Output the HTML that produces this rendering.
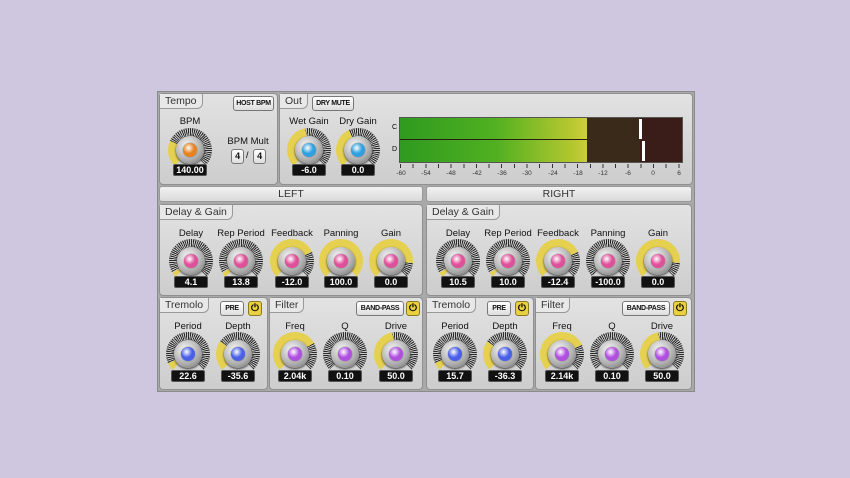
<!DOCTYPE html>
<html><head><meta charset="utf-8"><style>
*{box-sizing:border-box;margin:0;padding:0}
body{width:850px;height:478px;background:#cfc6e0;position:relative;overflow:hidden;font-family:"Liberation Sans",sans-serif}
#p{position:absolute;left:157px;top:91px;width:538px;height:301px;background:#a9a9a9;border:1px solid #8a8a8a}
.s{position:absolute;border:1px solid #8f8f8f;border-radius:4px;background:linear-gradient(#e2e2e2,#cdcdcd)}
.tab{position:absolute;height:15px;padding:0 5px;font-size:10.5px;line-height:14px;color:#333;border:1px solid #999;border-top:none;border-left:none;border-radius:0 0 6px 0;background:#e8e8e8;white-space:nowrap}
.btn{position:absolute;height:15px;font-size:7px;font-weight:bold;line-height:13px;text-align:center;color:#111;background:linear-gradient(#fff,#ddd);border:1px solid #777;border-radius:3px;letter-spacing:-.3px;white-space:nowrap;overflow:hidden}
.pw{position:absolute;width:14px;height:15px;background:#e8d040;border:1px solid #8a7a20;border-radius:3px;font-size:10px;line-height:13px;text-align:center;font-weight:bold}
.bar{position:absolute;height:16px;border:1px solid #999;border-radius:3px;background:linear-gradient(#f2f2f2,#dadada);font-size:10.5px;line-height:14px;text-align:center;color:#333}
.l{position:absolute;width:60px;text-align:center;font-size:9.5px;color:#111;white-space:nowrap}
.k{position:absolute;width:44px;height:44px;border-radius:50%;
background:conic-gradient(from 225deg,#e6d050 0 var(--a),transparent var(--a) 270deg,#d4d4d4 270deg),repeating-conic-gradient(#2a2a2a 0 3deg,#c8c8c8 3deg 6deg)}
.k::before{content:"";position:absolute;left:8px;top:8px;width:28px;height:28px;border-radius:50%;background:radial-gradient(circle at 40% 35%,#fafafa,#aaa 60%,#666);box-shadow:0 1px 2px #333}
.k::after{content:"";position:absolute;left:15px;top:15px;width:14px;height:14px;border-radius:50%;background:radial-gradient(circle at 40% 35%,#fff,var(--c) 45%);box-shadow:0 0 1px #333}
.v{position:absolute;width:34px;height:12px;background:#111;border:1px solid #555;border-radius:2px;color:#fff;font-size:9px;line-height:10px;text-align:center;font-weight:bold}
.sc{position:absolute;top:170px;font-size:6.5px;color:#333;width:20px;text-align:center}
</style></head><body>
<div id="p"></div>
<div class="s" style="left:159px;top:93px;width:119px;height:92px"></div>
<div class="tab" style="left:160px;top:94px">Tempo</div>
<div class="btn" style="left:233px;top:96px;width:41px">HOST BPM</div>
<div class="s" style="left:279px;top:93px;width:414px;height:92px"></div>
<div class="tab" style="left:280px;top:94px">Out</div>
<div class="btn" style="left:312px;top:96px;width:42px">DRY MUTE</div>

<div class="l" style="left:160px;top:116px">BPM</div>
<div class="k" style="left:168px;top:128px;--a:70deg;--c:#e8821e"></div>
<div class="v" style="left:173px;top:164px">140.00</div>
<div class="l" style="left:218px;top:136px">BPM Mult</div>
<div class="btn" style="left:231px;top:149px;width:13px;height:15px;font-size:9px">4</div>
<div style="position:absolute;left:246px;top:150px;font-size:9px">/</div>
<div class="btn" style="left:253px;top:149px;width:13px;height:15px;font-size:9px">4</div>

<div class="l" style="left:279px;top:116px">Wet Gain</div>
<div class="k" style="left:287px;top:128px;--a:125deg;--c:#30a0e0"></div>
<div class="v" style="left:292px;top:164px">-6.0</div>
<div class="l" style="left:328px;top:116px">Dry Gain</div>
<div class="k" style="left:336px;top:128px;--a:110deg;--c:#30a0e0"></div>
<div class="v" style="left:341px;top:164px">0.0</div>

<div style="position:absolute;left:399px;top:117px;width:284px;height:46px;background:#2a1d16;border:1px solid #555"></div>
<div style="position:absolute;left:400px;top:118px;width:187px;height:21px;background:linear-gradient(90deg,#2f9a20,#50b020 50%,#b8c830 92%,#d0d040)"></div>
<div style="position:absolute;left:400px;top:140px;width:191px;height:22px;background:linear-gradient(90deg,#2f9a20,#50b020 50%,#b8c830 92%,#d0d040)"></div>
<div style="position:absolute;left:587px;top:118px;width:53px;height:44px;background:#3a2a1a"></div>
<div style="position:absolute;left:640px;top:118px;width:42px;height:44px;background:#3a1c18"></div>
<div style="position:absolute;left:639px;top:119px;width:3px;height:20px;background:#fff"></div>
<div style="position:absolute;left:642px;top:141px;width:3px;height:20px;background:#fff"></div>
<div style="position:absolute;left:392px;top:124px;font-size:7px">C</div>
<div style="position:absolute;left:392px;top:146px;font-size:7px">D</div>
<div style="position:absolute;left:400px;top:164px;width:280px;height:4px;background:repeating-linear-gradient(90deg,#333 0 1px,transparent 1px 12.65px)"></div>
<div class="sc" style="left:391px">-60</div><div class="sc" style="left:416px">-54</div><div class="sc" style="left:441px">-48</div><div class="sc" style="left:467px">-42</div><div class="sc" style="left:492px">-36</div><div class="sc" style="left:517px">-30</div><div class="sc" style="left:543px">-24</div><div class="sc" style="left:568px">-18</div><div class="sc" style="left:593px">-12</div><div class="sc" style="left:618px">-6</div><div class="sc" style="left:643px">0</div><div class="sc" style="left:669px">6</div>

<div class="bar" style="left:159px;top:186px;width:264px">LEFT</div>
<div class="bar" style="left:426px;top:186px;width:266px">RIGHT</div>

<div class="s" style="left:159px;top:204px;width:264px;height:92px"></div>
<div class="tab" style="left:160px;top:205px">Delay &amp; Gain</div>
<div class="s" style="left:426px;top:204px;width:266px;height:92px"></div>
<div class="tab" style="left:427px;top:205px">Delay &amp; Gain</div>

<div class="l" style="left:161px;top:228px">Delay</div><div class="k" style="left:169px;top:239px;--a:12deg;--c:#e0509a"></div><div class="v" style="left:174px;top:276px">4.1</div>
<div class="l" style="left:211px;top:228px">Rep Period</div><div class="k" style="left:219px;top:239px;--a:12deg;--c:#e0509a"></div><div class="v" style="left:224px;top:276px">13.8</div>
<div class="l" style="left:262px;top:228px">Feedback</div><div class="k" style="left:270px;top:239px;--a:200deg;--c:#e0509a"></div><div class="v" style="left:275px;top:276px">-12.0</div>
<div class="l" style="left:311px;top:228px">Panning</div><div class="k" style="left:319px;top:239px;--a:270deg;--c:#e0509a"></div><div class="v" style="left:324px;top:276px">100.0</div>
<div class="l" style="left:361px;top:228px">Gain</div><div class="k" style="left:369px;top:239px;--a:230deg;--c:#e0509a"></div><div class="v" style="left:374px;top:276px">0.0</div>

<div class="l" style="left:428px;top:228px">Delay</div><div class="k" style="left:436px;top:239px;--a:12deg;--c:#e0509a"></div><div class="v" style="left:441px;top:276px">10.5</div>
<div class="l" style="left:478px;top:228px">Rep Period</div><div class="k" style="left:486px;top:239px;--a:12deg;--c:#e0509a"></div><div class="v" style="left:491px;top:276px">10.0</div>
<div class="l" style="left:528px;top:228px">Feedback</div><div class="k" style="left:536px;top:239px;--a:200deg;--c:#e0509a"></div><div class="v" style="left:541px;top:276px">-12.4</div>
<div class="l" style="left:578px;top:228px">Panning</div><div class="k" style="left:586px;top:239px;--a:0deg;--c:#e0509a"></div><div class="v" style="left:591px;top:276px">-100.0</div>
<div class="l" style="left:628px;top:228px">Gain</div><div class="k" style="left:636px;top:239px;--a:230deg;--c:#e0509a"></div><div class="v" style="left:641px;top:276px">0.0</div>

<div class="s" style="left:159px;top:297px;width:109px;height:93px"></div>
<div class="tab" style="left:160px;top:298px">Tremolo</div>
<div class="btn" style="left:220px;top:301px;width:24px">PRE</div><div class="pw" style="left:248px;top:301px">⏻</div>
<div class="s" style="left:269px;top:297px;width:154px;height:93px"></div>
<div class="tab" style="left:270px;top:298px">Filter</div>
<div class="btn" style="left:356px;top:301px;width:48px">BAND-PASS</div><div class="pw" style="left:406px;top:301px">⏻</div>

<div class="l" style="left:158px;top:321px">Period</div><div class="k" style="left:166px;top:332px;--a:20deg;--c:#4a60e8"></div><div class="v" style="left:171px;top:370px">22.6</div>
<div class="l" style="left:208px;top:321px">Depth</div><div class="k" style="left:216px;top:332px;--a:80deg;--c:#4a60e8"></div><div class="v" style="left:221px;top:370px">-35.6</div>
<div class="l" style="left:265px;top:321px">Freq</div><div class="k" style="left:273px;top:332px;--a:195deg;--c:#b050e0"></div><div class="v" style="left:278px;top:370px">2.04k</div>
<div class="l" style="left:315px;top:321px">Q</div><div class="k" style="left:323px;top:332px;--a:0deg;--c:#b050e0"></div><div class="v" style="left:328px;top:370px">0.10</div>
<div class="l" style="left:366px;top:321px">Drive</div><div class="k" style="left:374px;top:332px;--a:125deg;--c:#b050e0"></div><div class="v" style="left:379px;top:370px">50.0</div>

<div class="s" style="left:426px;top:297px;width:108px;height:93px"></div>
<div class="tab" style="left:427px;top:298px">Tremolo</div>
<div class="btn" style="left:487px;top:301px;width:24px">PRE</div><div class="pw" style="left:515px;top:301px">⏻</div>
<div class="s" style="left:535px;top:297px;width:157px;height:93px"></div>
<div class="tab" style="left:536px;top:298px">Filter</div>
<div class="btn" style="left:622px;top:301px;width:48px">BAND-PASS</div><div class="pw" style="left:673px;top:301px">⏻</div>

<div class="l" style="left:425px;top:321px">Period</div><div class="k" style="left:433px;top:332px;--a:20deg;--c:#4a60e8"></div><div class="v" style="left:438px;top:370px">15.7</div>
<div class="l" style="left:475px;top:321px">Depth</div><div class="k" style="left:483px;top:332px;--a:80deg;--c:#4a60e8"></div><div class="v" style="left:488px;top:370px">-36.3</div>
<div class="l" style="left:532px;top:321px">Freq</div><div class="k" style="left:540px;top:332px;--a:200deg;--c:#b050e0"></div><div class="v" style="left:545px;top:370px">2.14k</div>
<div class="l" style="left:582px;top:321px">Q</div><div class="k" style="left:590px;top:332px;--a:0deg;--c:#b050e0"></div><div class="v" style="left:595px;top:370px">0.10</div>
<div class="l" style="left:632px;top:321px">Drive</div><div class="k" style="left:640px;top:332px;--a:125deg;--c:#b050e0"></div><div class="v" style="left:645px;top:370px">50.0</div>
</body></html>
